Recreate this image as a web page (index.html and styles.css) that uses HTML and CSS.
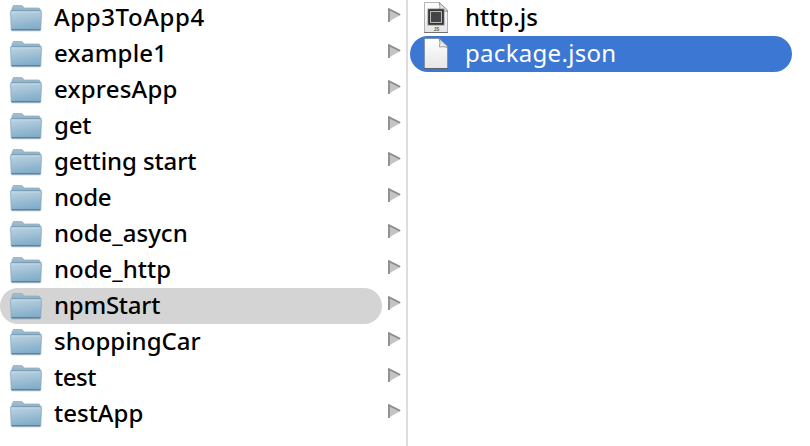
FILE: index.html
```
<!DOCTYPE html>
<html lang="en">
<head>
<meta charset="utf-8">
<title>Finder</title>
<link rel="stylesheet" href="styles.css">
</head>
<body>
<svg class="defs" width="0" height="0" aria-hidden="true">
  <defs>
    <linearGradient id="front" x1="0" y1="0" x2="0.25" y2="1"><stop offset="0" stop-color="#c0d5e3"/><stop offset="1" stop-color="#83aeca"/></linearGradient>
    <linearGradient id="back" x1="0" y1="0" x2="0" y2="1"><stop offset="0" stop-color="#a5c0d0"/><stop offset="1" stop-color="#86abc2"/></linearGradient>
    <linearGradient id="paper" x1="0" y1="0" x2="0" y2="1"><stop offset="0" stop-color="#fff"/><stop offset="1" stop-color="#e6e6e6"/></linearGradient>
    <linearGradient id="curl" x1="0" y1="1" x2="1" y2="0"><stop offset="0" stop-color="#fff"/><stop offset="1" stop-color="#c4c4c4"/></linearGradient>
    <symbol id="folder" viewBox="0 0 32 27">
      <path d="M1.500 25.800H30.500" stroke="#000" stroke-opacity=".25" stroke-width="1"/>
      <path d="M2 8V3.500L2.700 1.500Q3 .5 4 .5H11.500Q12.600 .5 13 1.500L13.800 3H28.500Q30 3 30 4.500V8Z" fill="url(#back)" stroke="#8aa8ba" stroke-width=".7"/>
      <path d="M.5 6.500Q.5 5.500 1.500 5.500H30.500Q31.500 5.500 31.500 6.500L30.800 24.500Q30.800 25 30 25H2Q1.200 25 1.200 24.500Z" fill="url(#front)" stroke="#8babc0" stroke-width=".8"/>
      <path d="M1 5.700H31" stroke="#7199b1" stroke-width=".9"/>
      <path d="M1.300 7H30.700" stroke="#c5d9e6" stroke-width=".8"/>
      <path d="M1.500 24.700H30.500" stroke="#527e9c" stroke-width="1.200"/>
    </symbol>
    <symbol id="arrow" viewBox="0 0 13 14">
      <path d="M0 0L13 6.800L0 14Z" fill="#c4c4c4"/>
      <path d="M1 14V1.200L12 6.800" fill="none" stroke="#8d8d8d" stroke-width="1.800"/>
    </symbol>
    <symbol id="page" viewBox="0 0 24 31">
      <path d="M.5 .5H15.500L23.500 8.500V30.500H.5Z" fill="url(#paper)" stroke="#777" stroke-opacity=".55"/>
      <path d="M15.200 .7Q16.500 4.500 15.500 9Q20 8 23.400 9.500L23 7.500Z" fill="url(#curl)" stroke="#777" stroke-width=".7"/>
      <path d="M0 30.500H24" stroke="#333" stroke-opacity=".5"/>
    </symbol>
  </defs>
</svg>
<main class="browser">
  <ul class="column folders">
    <li class="row"><svg class="folder"><use href="#folder"/></svg><span class="name widest">App3ToApp4</span><svg class="arrow"><use href="#arrow"/></svg></li>
    <li class="row"><svg class="folder"><use href="#folder"/></svg><span class="name wide">example1</span><svg class="arrow"><use href="#arrow"/></svg></li>
    <li class="row"><svg class="folder"><use href="#folder"/></svg><span class="name wide">expresApp</span><svg class="arrow"><use href="#arrow"/></svg></li>
    <li class="row"><svg class="folder"><use href="#folder"/></svg><span class="name tight">get</span><svg class="arrow"><use href="#arrow"/></svg></li>
    <li class="row"><svg class="folder"><use href="#folder"/></svg><span class="name snug">getting start</span><svg class="arrow"><use href="#arrow"/></svg></li>
    <li class="row"><svg class="folder"><use href="#folder"/></svg><span class="name tight">node</span><svg class="arrow"><use href="#arrow"/></svg></li>
    <li class="row"><svg class="folder"><use href="#folder"/></svg><span class="name">node_asycn</span><svg class="arrow"><use href="#arrow"/></svg></li>
    <li class="row"><svg class="folder"><use href="#folder"/></svg><span class="name">node_http</span><svg class="arrow"><use href="#arrow"/></svg></li>
    <li class="row open"><svg class="folder"><use href="#folder"/></svg><span class="name tight">npmStart</span><svg class="arrow"><use href="#arrow"/></svg></li>
    <li class="row"><svg class="folder"><use href="#folder"/></svg><span class="name">shoppingCar</span><svg class="arrow"><use href="#arrow"/></svg></li>
    <li class="row"><svg class="folder"><use href="#folder"/></svg><span class="name tightest">test</span><svg class="arrow"><use href="#arrow"/></svg></li>
    <li class="row"><svg class="folder"><use href="#folder"/></svg><span class="name">testApp</span><svg class="arrow"><use href="#arrow"/></svg></li>
  </ul>
  <ul class="column files">
    <li class="row"><svg class="file" viewBox="0 0 24 31"><use href="#page" width="24" height="31"/><rect x="4" y="7" width="16" height="16" fill="#333" stroke="#777" stroke-width=".8"/><rect x="6.500" y="9.500" width="11" height="11" fill="#444" stroke="#bbb"/><text x="12.500" y="28.500" class="badge">JS</text></svg><span class="name">http.js</span></li>
    <li class="row selected"><svg class="file"><use href="#page"/></svg><span class="name">package.json</span></li>
  </ul>
</main>
</body>
</html>
```
FILE: styles.css
```
body { margin: 0; background: #fff; overflow: hidden; }
.defs { position: absolute; }
.browser { display: flex; height: 446px; }
.column { list-style: none; margin: 0; padding: 0; }
.folders { width: 406px; border-right: 2px solid #ddd; }
.files { width: 382px; padding-left: 2px; }
.row {
  display: flex;
  box-sizing: border-box;
  height: 36px;
  padding-left: 10px;
  color: #000;
  font: 500 24px/34px "Noto Sans", "Open Sans", sans-serif;
}
.open { width: 382px; border-radius: 18px; background: #d4d4d4; }
.selected { border-radius: 18px; background: #3d77d4; color: #fff; font-weight: 400; letter-spacing: 0.3px; }
.folder { flex: none; width: 32px; height: 27px; margin-top: 5px; }
.name { flex: none; width: 334px; margin-left: 12px; white-space: nowrap; }
.widest { letter-spacing: 0.6px; }
.wide { letter-spacing: 0.2px; }
.snug { letter-spacing: -0.1px; }
.tight { letter-spacing: -0.25px; }
.tightest { letter-spacing: -0.5px; }
.arrow { flex: none; width: 13px; height: 14px; margin-top: 8px; }
.file { flex: none; width: 24px; height: 31px; margin: 2px 0 0 4px; }
.files .name { width: 300px; margin-left: 17px; }
.badge { font: bold 4.500px "Liberation Sans", sans-serif; text-anchor: middle; fill: #555; }
```
